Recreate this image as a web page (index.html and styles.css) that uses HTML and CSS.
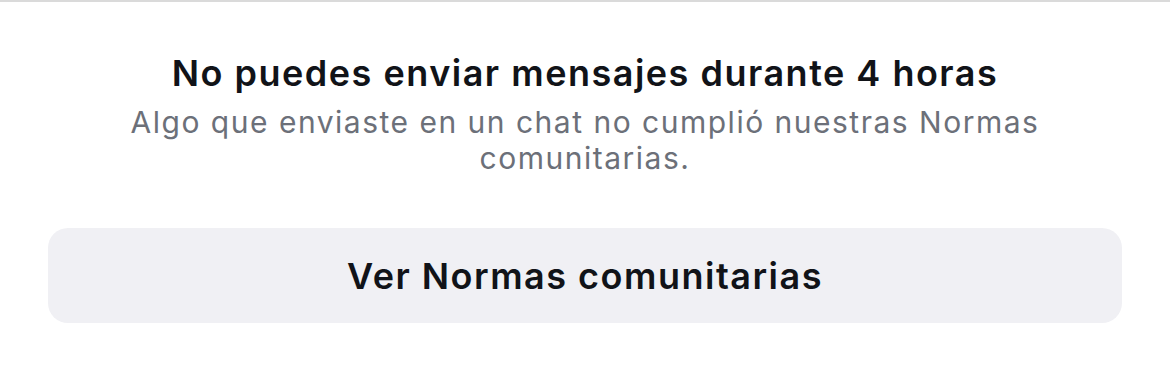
FILE: index.html
```html
<!DOCTYPE html>
<html lang="es">
<head>
  <meta charset="UTF-8" />
  <meta name="viewport" content="width=device-width, initial-scale=1.0" />
  <title>Mensajes restringidos</title>
  <link rel="stylesheet" href="styles.css">
</head>
<body>
  <div class="sheet">
    <div class="notice">
      <h1>No puedes enviar mensajes durante 4 horas</h1>
      <p class="info">Algo que enviaste en un chat no cumplió nuestras Normas comunitarias.</p>
    </div>
    <button class="btn-rules">Ver Normas comunitarias</button>
  </div>
</body>
</html>
```

FILE: styles.css
```css
body {
  margin: 0;
  font-family: Inter, "Noto Sans", sans-serif;
  background: #fff;
}
.sheet {
  border-top: 2px solid #dadada;
  padding: 0 48px;
  display: flex;
  flex-direction: column;
  align-items: stretch;
}
.notice {
  text-align: center;
  padding: 0 40px;
  margin-top: 49px;
}
h1 {
  margin: 0;
  font-size: 36px;
  font-weight: 600;
  line-height: 44px;
  letter-spacing: 1.5px;
  color: #111318;
}
.info {
  margin: 9px 0 0;
  font-size: 30px;
  line-height: 36px;
  letter-spacing: 1.5px;
  color: #6c7079;
}
.btn-rules {
  margin-top: 52px;
  height: 95px;
  border: none;
  border-radius: 20px;
  background: #f0f0f4;
  font-family: inherit;
  font-size: 36px;
  font-weight: 600;
  letter-spacing: 1.5px;
  color: #111318;
  cursor: pointer;
}
```
